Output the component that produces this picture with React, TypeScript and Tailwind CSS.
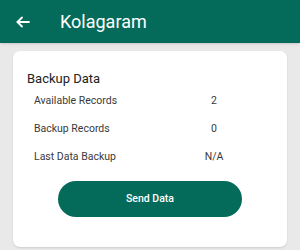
const rows = [
  { label: "Available Records", value: "2" },
  { label: "Backup Records", value: "0" },
  { label: "Last Data Backup", value: "N/A" },
];

export default function App() {
  return (
    <div className="w-[300px] h-[250px] bg-[#e9e9e9] font-['Roboto',sans-serif] overflow-hidden">
      <div className="h-[43px] bg-[#046b5b] flex items-center pl-[16px] shadow-sm">
        <svg width="14" height="12" viewBox="0 0 14 12" fill="none" stroke="white" strokeWidth="1.8" strokeLinecap="round" strokeLinejoin="round">
          <path d="M13 6H1.5" />
          <path d="M6 1.5 1.5 6 6 10.5" />
        </svg>
        <span className="ml-[30px] text-white text-[18px] leading-none">Kolagaram</span>
      </div>
      <div className="px-[13px] pt-[8px]">
        <div className="bg-white rounded-[7px] pt-[20px] pb-[30px] shadow-[0_1px_2px_rgba(0,0,0,0.12)]">
          <h2 className="pl-[14px] text-[13px] leading-[16px] text-[#222]">Backup Data</h2>
          <div className="pl-[21px]">
            {rows.map((r) => (
              <div key={r.label} className="h-[28px] flex items-center text-[10.5px] text-[#3a3a3a]">
                <span className="w-[140px]">{r.label}</span>
                <span className="w-[80px] text-center">{r.value}</span>
              </div>
            ))}
          </div>
          <div className="flex justify-center mt-[10px]">
            <button className="w-[184px] h-[36px] rounded-full bg-[#046b5b] text-white text-[10.5px] font-medium">
              Send Data
            </button>
          </div>
        </div>
      </div>
    </div>
  );
}
